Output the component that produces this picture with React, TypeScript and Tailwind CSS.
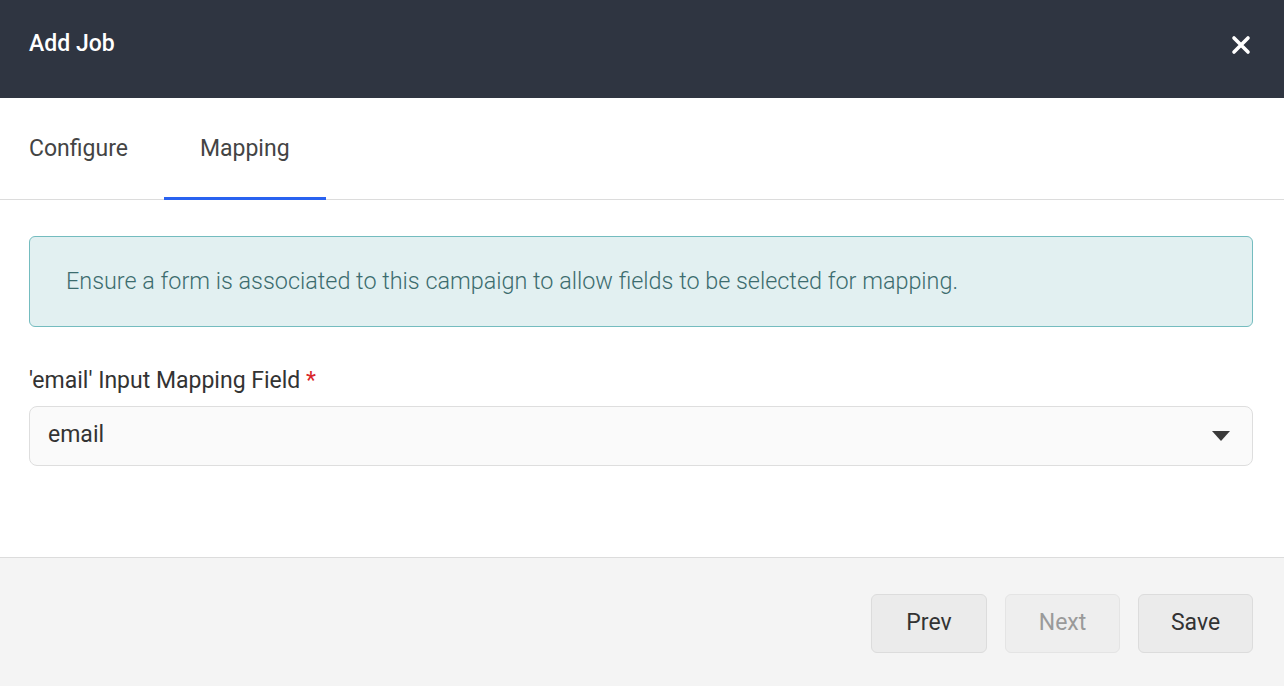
import { useState } from 'react'

// ─── Page ─────────────────────────────────────────────────────────────────────

export default function App() {
  const [tab, setTab] = useState<'configure' | 'mapping'>('mapping')

  return (
    <div className="flex h-[686px] w-[1284px] flex-col bg-white font-['Roboto',sans-serif]">
      {/* Header */}
      <div className="flex h-[98px] shrink-0 items-center justify-between bg-[#2f3541] pb-[9px] pl-[29px] pr-[33px]">
        <h1 className="text-[23px] font-medium text-white">Add Job</h1>
        <button className="text-white">
          <svg width="20" height="20" viewBox="0 0 20 20">
            <path d="M3 3 L17 17 M17 3 L3 17" stroke="currentColor" strokeWidth="3.6" strokeLinecap="round" />
          </svg>
        </button>
      </div>

      {/* Tabs */}
      <div className="flex h-[102px] shrink-0 items-stretch border-b border-[#dcdcdc] pl-[29px] pt-[4px]">
        <button
          onClick={() => setTab('configure')}
          className={`-mb-px mr-[36px] border-b-[3px] text-[23px] text-[#444] ${tab === 'configure' ? 'border-[#2962f0] px-[36px]' : 'border-transparent'}`}
        >
          Configure
        </button>
        <button
          onClick={() => setTab('mapping')}
          className={`-mb-px border-b-[3px] px-[36px] text-[23px] text-[#444] ${tab === 'mapping' ? 'border-[#2962f0]' : 'border-transparent'}`}
        >
          Mapping
        </button>
      </div>

      {/* Body */}
      <div className="flex flex-1 flex-col pl-[29px] pr-[31px] pt-[36px]">
        <div className="flex h-[91px] items-center rounded-[6px] border border-[#74bcbf] bg-[#e2f0f1] px-[36px] text-[23.4px] font-light text-[#3c6c6e]">
          Ensure a form is associated to this campaign to allow fields to be selected for mapping.
        </div>

        <label className="mt-[37px] text-[23px] text-[#333]">
          'email' Input Mapping Field <span className="text-[#d9262c]">*</span>
        </label>
        <div className="mt-[7px] flex h-[60px] items-center justify-between rounded-[8px] border border-[#dedede] bg-[#fafafa] pl-[18px] pr-[22px]">
          <span className="text-[23px] text-[#333]">email</span>
          <svg width="18" height="10" viewBox="0 0 18 10">
            <path d="M0 0 H18 L9 10 Z" fill="#3a3a3a" />
          </svg>
        </div>
      </div>

      {/* Footer */}
      <div className="flex h-[129px] shrink-0 items-center justify-end gap-[18px] border-t border-[#dcdcdc] bg-[#f4f4f4] pt-[3px] pr-[31px]">
        <button className="h-[59px] w-[116px] rounded-[6px] border border-[#dcdcdc] bg-[#ebebeb] text-[23px] text-[#333]">
          Prev
        </button>
        <button disabled className="h-[59px] w-[115px] rounded-[6px] border border-[#e4e4e4] bg-[#eeeeee] text-[23px] text-[#9a9a9a]">
          Next
        </button>
        <button className="h-[59px] w-[115px] rounded-[6px] border border-[#dcdcdc] bg-[#ebebeb] text-[23px] text-[#333]">
          Save
        </button>
      </div>
    </div>
  )
}
